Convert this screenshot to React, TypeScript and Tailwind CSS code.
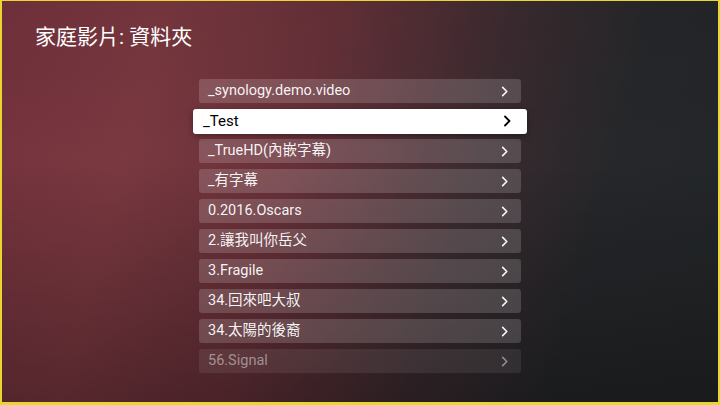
import React from "react";

const items = [
  "_synology.demo.video",
  "_Test",
  "_TrueHD(內嵌字幕)",
  "_有字幕",
  "0.2016.Oscars",
  "2.讓我叫你岳父",
  "3.Fragile",
  "34.回來吧大叔",
  "34.太陽的後裔",
  "56.Signal",
];

function Chevron({ className }: { className: string }) {
  return (
    <svg viewBox="0 0 12 12" className={className} fill="none" stroke="currentColor" strokeWidth={1.8} strokeLinecap="round" strokeLinejoin="round">
      <path d="M4 1.5 8.5 6 4 10.5" />
    </svg>
  );
}

export default function App() {
  return (
    <div
      className="w-[720px] h-[405px] box-border border-t-[1px] border-l-[2px] border-r-[2px] border-b-[3px] border-[#e9d62f] overflow-hidden relative bg-[linear-gradient(105deg,#74323d_0%,#7a3840_20%,#683139_40%,#3c2b30_62%,#25272a_80%,#232628_100%)]"
      style={{ fontFamily: 'Roboto, "Noto Sans CJK TC", sans-serif' }}
    >
      <div className="absolute inset-0 bg-[linear-gradient(180deg,rgba(0,0,0,0.06)_0%,rgba(0,0,0,0)_40%,rgba(0,0,0,0.3)_100%)]" />
      <div className="relative flex flex-col h-full">
        <div className="pl-[33px] pt-[22px] h-[75px] text-[21px] leading-[28px] text-white">家庭影片: 資料夾</div>
        <div className="flex flex-col items-center">
          {items.map((t, i) => {
            const focused = i === 1;
            const faded = i === items.length - 1;
            return (
              <div key={t} className="h-[30px] flex items-center justify-center w-full">
                {focused ? (
                  <div className="w-[334px] h-[25px] bg-white rounded-[3px] flex items-center justify-between pl-[10px] pr-[14px] text-black text-[15px] shadow-[0_2px_6px_rgba(0,0,0,0.35)]">
                    <span>{t}</span>
                    <Chevron className="w-[12px] h-[12px]" />
                  </div>
                ) : (
                  <div
                    className={
                      "w-[322px] h-[24px] rounded-[3px] flex items-center justify-between pl-[9px] pr-[11px] text-[14.5px] " +
                      (faded ? "bg-white/[0.08] text-white/45" : "bg-white/[0.16] text-white/95")
                    }
                  >
                    <span>{t}</span>
                    <Chevron className="w-[11px] h-[11px]" />
                  </div>
                )}
              </div>
            );
          })}
        </div>
      </div>
    </div>
  );
}
